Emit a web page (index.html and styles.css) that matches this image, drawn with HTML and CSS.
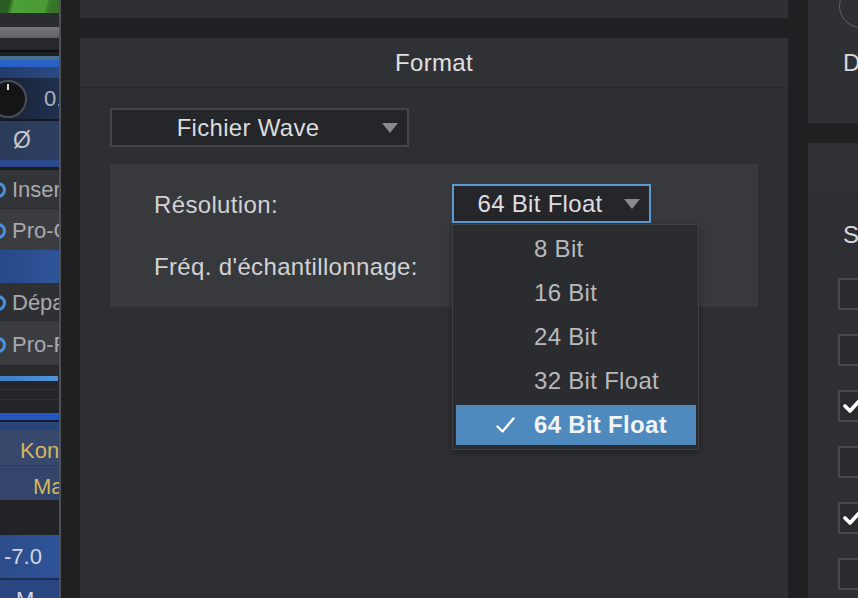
FILE: index.html
```html
<!DOCTYPE html>
<html lang="fr">
<head>
<meta charset="utf-8">
<title>Format</title>
<link rel="stylesheet" href="styles.css">
</head>
<body>
<div class="app">
  <div class="strip">
    <div class="s-green"></div>
    <div class="s-dark1"></div>
    <div class="s-grey"></div>
    <div class="s-dark2"></div>
    <div class="s-black"></div>
    <div class="s-dark3"></div>
    <div class="s-teal"></div>
    <div class="s-blue1"></div>
    <div class="s-blue2"></div>
    <div class="s-knob"><span class="knob"><span class="knob-tick"></span></span><span class="knob-val">0.</span></div>
    <div class="s-sep"></div>
    <div class="s-phase">Ø</div>
    <div class="s-blue3"></div>
    <div class="s-dark4"></div>
    <div class="s-row s-row-a"><span class="ring"></span><span>Inser</span></div>
    <div class="s-row s-row-b"><span class="ring"></span><span>Pro-C</span></div>
    <div class="s-blue4"></div>
    <div class="s-row s-row-c"><span class="ring"></span><span>Dépa</span></div>
    <div class="s-row s-row-b s-row-d"><span class="ring"></span><span>Pro-F</span></div>
    <div class="s-dark5"></div>
    <div class="s-meter"></div>
    <div class="s-lines"><span></span><span></span></div>
    <div class="s-blue5"></div>
    <div class="s-blue6"></div>
    <div class="s-gold s-gold-a">Kon</div>
    <div class="s-gold s-gold-b">Ma</div>
    <div class="s-dark6"></div>
    <div class="s-fader">-7.0</div>
    <div class="s-mute">M</div>
  </div>
  <div class="divider"></div>
  <div class="gutter"></div>
  <main class="main">
    <div class="main-top"></div>
    <section class="format">
      <div class="format-head">Format</div>
      <div class="format-body">
        <div class="select select-type"><span class="select-text">Fichier Wave</span><span class="arrow"></span></div>
        <div class="settings">
          <div class="row">
            <span class="label">Résolution:</span>
            <div class="combo">
              <div class="select select-res"><span class="select-text">64 Bit Float</span><span class="arrow"></span></div>
              <ul class="menu">
                <li class="item"><span class="check"></span>8 Bit</li>
                <li class="item"><span class="check"></span>16 Bit</li>
                <li class="item"><span class="check"></span>24 Bit</li>
                <li class="item"><span class="check"></span>32 Bit Float</li>
                <li class="item item-sel"><span class="check"><svg width="19" height="17" viewBox="0 0 19 17"><polyline points="1.5,9.5 6.5,14.5 17.5,1.5" fill="none" stroke="#ffffff" stroke-width="2.4" stroke-linecap="round" stroke-linejoin="round"/></svg></span>64 Bit Float</li>
              </ul>
            </div>
          </div>
          <div class="row">
            <span class="label">Fréq. d'échantillonnage:</span>
          </div>
        </div>
      </div>
    </section>
  </main>
  <div class="gutter2"></div>
  <aside class="right">
    <div class="r-top">
      <div class="r-circle"></div>
      <div class="r-letter r-letter-d">D</div>
    </div>
    <section class="r-sec">
      <div class="r-head"></div>
      <div class="r-letter r-letter-s">S</div>
      <div class="r-boxes">
        <span class="cbox"></span>
        <span class="cbox"></span>
        <span class="cbox"><svg width="20" height="16" viewBox="0 0 20 16"><polyline points="2,8 7,13 17,2" fill="none" stroke="#ffffff" stroke-width="3.6" stroke-linecap="round" stroke-linejoin="round"/></svg></span>
        <span class="cbox"></span>
        <span class="cbox"><svg width="20" height="16" viewBox="0 0 20 16"><polyline points="2,8 7,13 17,2" fill="none" stroke="#ffffff" stroke-width="3.6" stroke-linecap="round" stroke-linejoin="round"/></svg></span>
        <span class="cbox"></span>
      </div>
    </section>
  </aside>
</div>
</body>
</html>
```

FILE: styles.css
```css
* { box-sizing: border-box; }
html, body { margin: 0; padding: 0; }
body {
  width: 858px;
  height: 598px;
  overflow: hidden;
  background: #1f2022;
  font-family: "Liberation Sans", Helvetica, Arial, sans-serif;
  color: #d4d4d6;
}
.app {
  display: flex;
  width: 858px;
  height: 598px;
}

/* ---------- left mixer strip ---------- */
.strip {
  width: 59px;
  flex: none;
  display: flex;
  flex-direction: column;
  overflow: hidden;
  background: #222326;
}
.strip > div { flex: none; }
.s-green {
  height: 13px;
  background: linear-gradient(105deg, #2b5c22 0%, #2b5c22 16%, #4d9f37 24%, #4a9a35 76%, #3a7a2c 80%, #356f29 100%);
}
.s-dark1 { height: 14px; background: #2b2c30; }
.s-grey { height: 11px; background: linear-gradient(180deg, #77787a, #5f6062); }
.s-dark2 { height: 12px; background: #27282c; }
.s-black { height: 2px; background: #0c0c0e; }
.s-dark3 { height: 4px; background: #1e1f23; }
.s-teal { height: 4px; background: #46708d; }
.s-blue1 { height: 7px; background: #2a60c6; }
.s-blue2 { height: 11px; background: linear-gradient(90deg, #223b6c, #2b4a82); }
.s-knob {
  height: 41px;
  background: linear-gradient(90deg, #1a2236, #20304e);
  display: flex;
  align-items: center;
  gap: 17px;
}
.knob {
  width: 38px;
  height: 38px;
  margin-left: -11px;
  border-radius: 50%;
  background: #141517;
  border: 2px solid #4c4f55;
  display: flex;
  justify-content: center;
  flex: none;
}
.knob-tick { width: 2px; height: 6px; margin-top: 2px; background: #d8d8d8; }
.knob-val { font-size: 22px; color: #aeb2ba; white-space: nowrap; }
.s-sep { height: 2px; background: #141820; }
.s-phase {
  height: 39px;
  background: linear-gradient(90deg, #2a3a58, #2e4062);
  font-size: 23px;
  line-height: 39px;
  color: #c2c6ce;
  padding-left: 13px;
}
.s-blue3 { height: 7px; background: #2a4a8c; }
.s-dark4 { height: 3px; background: #1b1d23; }
.s-row {
  display: flex;
  align-items: center;
  gap: 6px;
  font-size: 22px;
  color: #a8a9ad;
  white-space: nowrap;
  padding-top: 2px;
}
.s-row-a { height: 38px; background: #333438; }
.s-row-b { height: 42px; background: #3b3c40; border-top: 1px solid #2c2d31; }
.s-row-c { height: 37px; background: #2f3034; }
.s-row.s-row-d { height: 45px; padding-top: 4px; }
.ring {
  width: 16px;
  height: 16px;
  margin-left: -10px;
  border-radius: 50%;
  border: 3px solid #4a90e0;
  flex: none;
}
.s-blue4 { height: 33px; background: linear-gradient(90deg, #28488a, #2f5598); }
.s-dark5 { height: 11px; background: #2a2b2f; border-top: 1px solid #232428; }
.s-meter { height: 5px; background: linear-gradient(90deg, #3f7fc4, #5094d8); margin-right: 1px; }
.s-lines {
  height: 32px;
  background: #242529;
  display: flex;
  flex-direction: column;
  gap: 9px;
  padding-top: 8px;
}
.s-lines span { height: 1px; background: #323338; }
.s-blue5 { height: 7px; background: #2456c4; }
.s-blue6 { height: 10px; background: #28447a; border-top: 2px solid #1a1c24; }
.s-gold {
  height: 35px;
  line-height: 35px;
  font-size: 22px;
  color: #d4b65e;
  white-space: nowrap;
  padding-top: 3px;
}
.s-gold-a { background: #36486b; padding-left: 20px; }
.s-gold-b { background: #33456a; padding-left: 33px; border-top: 1px solid #2c3c5c; }
.s-dark6 { height: 35px; background: #222326; }
.s-fader {
  height: 43px;
  line-height: 43px;
  background: linear-gradient(90deg, #2c4c8a, #2f549a);
  font-size: 22px;
  color: #d2d6dc;
  padding-left: 4px;
}
.s-mute {
  height: 20px;
  background: #2a4680;
  border-top: 2px solid #1e2e52;
  font-size: 22px;
  line-height: 40px;
  color: #d2d6dc;
  padding-left: 16px;
  overflow: hidden;
}
.divider { width: 2px; flex: none; background: #505155; }
.gutter { width: 19px; flex: none; background: #1f2022; }
.gutter2 { width: 20px; flex: none; background: #1f2022; }

/* ---------- main panel ---------- */
.main {
  width: 708px;
  flex: none;
  display: flex;
  flex-direction: column;
  gap: 20px;
}
.main-top { height: 18px; background: #2f3034; }
.format {
  flex: 1;
  background: #2e2f33;
}
.format-head {
  height: 50px;
  border-bottom: 1px solid #27282b;
  background: #303135;
  font-size: 24px;
  letter-spacing: 0.3px;
  color: #e0e0e2;
  display: flex;
  align-items: center;
  justify-content: center;
}
.format-body {
  padding: 20px 30px;
}
.select {
  display: flex;
  align-items: center;
  height: 39px;
  background: #252629;
  border: 2px solid #444549;
  font-size: 24px;
  letter-spacing: 0.3px;
  color: #dcdcde;
  padding-right: 9px;
}
.select-text { flex: 1; text-align: center; }
.arrow {
  width: 0;
  height: 0;
  border-left: 8px solid transparent;
  border-right: 8px solid transparent;
  border-top: 10px solid #8a8a8d;
  flex: none;
}
.select-type { width: 299px; }
.select-type .select-text { padding-left: 2px; }
.settings {
  margin-top: 17px;
  width: 648px;
  height: 143px;
  background: #38393d;
  padding: 20px 0 0 44px;
  display: flex;
  flex-direction: column;
  gap: 24px;
}
.row {
  display: flex;
  align-items: center;
  height: 39px;
}
.label {
  width: 298px;
  flex: none;
  font-size: 24px;
  letter-spacing: 0.35px;
  color: #d2d2d4;
  padding-top: 3px;
}
.row:last-child .label { padding-top: 0; }
.combo { position: relative; }
.select-res {
  width: 199px;
  border-color: #5b9ad6;
  color: #dedee0;
}
.select-res .select-text { padding-left: 2px; }
.menu {
  position: absolute;
  top: 40px;
  left: 0;
  width: 247px;
  margin: 0;
  padding: 4px 2px 4px 3px;
  list-style: none;
  background: #2b2c2f;
  border: 1px solid #404145;
  box-shadow: 0 2px 6px rgba(0, 0, 0, 0.35);
  z-index: 5;
  display: flex;
  flex-direction: column;
  gap: 4px;
}
.item {
  display: flex;
  align-items: center;
  height: 40px;
  font-size: 24px;
  letter-spacing: 0.3px;
  color: #b9b9bc;
}
.check {
  width: 78px;
  flex: none;
  padding-left: 40px;
  display: flex;
  align-items: center;
}
.item-sel {
  background: #4f8abf;
  color: #f2f4f6;
  font-weight: bold;
}

/* ---------- right panel ---------- */
.right {
  flex: 1;
  display: flex;
  flex-direction: column;
  gap: 20px;
  overflow: hidden;
}
.r-top {
  height: 123px;
  flex: none;
  background: #2f3034;
  overflow: hidden;
}
.r-circle {
  width: 44px;
  height: 44px;
  margin: -16px 0 0 31px;
  border-radius: 50%;
  border: 1.5px solid #606165;
}
.r-letter {
  font-size: 24px;
  color: #d8d8da;
  padding-left: 35px;
}
.r-letter-d { margin-top: 21px; }
.r-sec {
  flex: 1;
  background: #2e2f33;
}
.r-head {
  height: 51px;
  background: #303135;
  border-bottom: 1px solid #27282b;
}
.r-letter-s { margin-top: 27px; line-height: 28px; }
.r-boxes {
  display: flex;
  flex-direction: column;
  gap: 24px;
  padding-left: 30px;
  margin-top: 29px;
}
.cbox {
  width: 34px;
  height: 32px;
  flex: none;
  border: 2px solid #48494d;
  background: #2a2b2e;
  display: flex;
  align-items: center;
  padding-left: 3px;
}
```
